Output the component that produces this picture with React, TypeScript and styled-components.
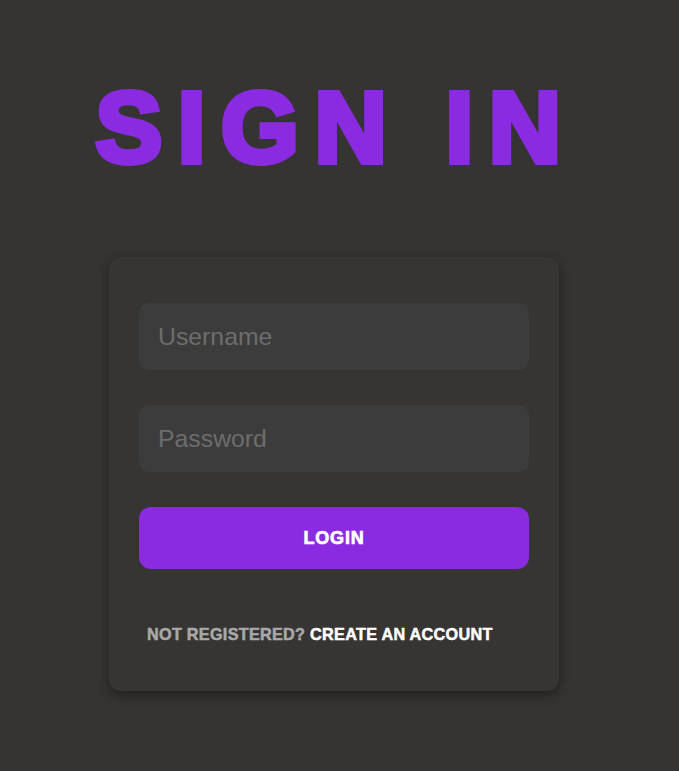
import React from "react";
import styled, { createGlobalStyle } from "styled-components";

const GlobalStyle = createGlobalStyle`
  html, body {
    margin: 0;
    padding: 0;
    background: #353433;
  }
  * { box-sizing: border-box; }
`;

const Page = styled.main`
  min-height: 100vh;
  display: flex;
  flex-direction: column;
  align-items: center;
  padding-right: 11px;
  background: #353433;
  font-family: "Liberation Sans", Arial, sans-serif;
`;

const Title = styled.h1`
  margin: 77px 0 0;
  font-size: 100px;
  line-height: 1;
  font-weight: 700;
  letter-spacing: 15.5px;
  color: #8a2be2;
  -webkit-text-stroke: 6px #8a2be2;
  padding-left: 4px;
`;

const Card = styled.form`
  margin-top: 80px;
  width: 450px;
  padding: 46px 30px 47px;
  background: #363534;
  border-radius: 12px;
  box-shadow: 0 4px 12px rgba(0, 0, 0, 0.4);
  display: flex;
  flex-direction: column;
  gap: 35px;
`;

const Input = styled.input`
  width: 100%;
  height: 67px;
  border: none;
  outline: none;
  border-radius: 10px;
  background: #3c3c3c;
  padding: 0 19px;
  font-family: "Liberation Sans", Arial, sans-serif;
  font-size: 24.8px;
  color: #ddd;
  &::placeholder {
    color: #6d6d6d;
  }
`;

const Button = styled.button`
  width: 100%;
  height: 62px;
  border: none;
  border-radius: 12px;
  background: #8a2be2;
  color: #fff;
  font-family: "Liberation Sans", Arial, sans-serif;
  font-weight: 700;
  font-size: 18px;
  letter-spacing: 0.8px;
  -webkit-text-stroke: 0.7px #fff;
  cursor: pointer;
`;

const Footer = styled.p`
  margin: 20px 0 0;
  padding-left: 8px;
  font-size: 16.2px;
  line-height: 20px;
  font-weight: 700;
  letter-spacing: 0.3px;
  color: #a9a9a9;
  -webkit-text-stroke: 0.5px #a9a9a9;
  white-space: nowrap;
`;

const Link = styled.a`
  color: #fff;
  -webkit-text-stroke: 0.5px #fff;
  text-decoration: none;
`;

export default function App() {
  return (
    <>
      <GlobalStyle />
      <Page>
        <Title>SIGN IN</Title>
        <Card onSubmit={(e) => e.preventDefault()}>
          <Input type="text" placeholder="Username" />
          <Input type="password" placeholder="Password" />
          <Button type="submit">LOGIN</Button>
          <Footer>
            NOT REGISTERED? <Link href="#">CREATE AN ACCOUNT</Link>
          </Footer>
        </Card>
      </Page>
    </>
  );
}
